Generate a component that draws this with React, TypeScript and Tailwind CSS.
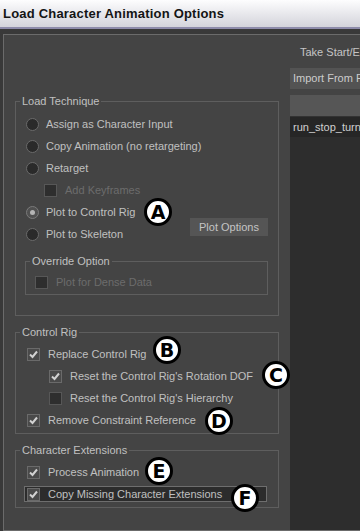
import React from 'react';

const Radio: React.FC<{ label: string; selected?: boolean }> = ({ label, selected = false }) => (
  <div className="flex h-[22px] items-center gap-[7px] pl-[10px]">
    <span
      className={`flex h-[13px] w-[13px] items-center justify-center rounded-full border ${
        selected ? 'border-[#7a7a7a] bg-[#505050]' : 'border-[#6a6a6a] bg-[#2a2a2a]'
      }`}
    >
      {selected && <span className="h-[5px] w-[5px] rounded-full bg-[#b4b4b4]" />}
    </span>
    <span className="text-[#c0c0c0]">{label}</span>
  </div>
);

const Check: React.FC<{ checked?: boolean }> = ({ checked = false }) =>
  checked ? (
    <span className="flex h-[13px] w-[13px] items-center justify-center border border-[#6a6a6a] bg-[#4a4a4a]">
      <svg width="11" height="11" viewBox="0 0 11 11">
        <polyline points="2,5.5 4.5,8 9,2.5" fill="none" stroke="#d2d2d2" strokeWidth="2" />
      </svg>
    </span>
  ) : (
    <span className="h-[13px] w-[13px] border border-[#575757] bg-[#2e2e2e]" />
  );

const CheckRow: React.FC<{ label: string; checked?: boolean; disabled?: boolean; indent?: string }> = ({
  label,
  checked = false,
  disabled = false,
  indent = 'pl-[11px]',
}) => (
  <div className={`flex h-[22px] items-center gap-[8px] ${indent}`}>
    <Check checked={checked} />
    <span className={disabled ? 'text-[#6c6c6c]' : 'text-[#c0c0c0]'}>{label}</span>
  </div>
);

const Group: React.FC<{ title: string; className?: string; children: React.ReactNode }> = ({ title, className = '', children }) => (
  <fieldset className={`border border-[#5e5e5e] ${className}`}>
    <legend className="ml-[4px] px-[2px] leading-[13px] text-[#c0c0c0]">{title}</legend>
    {children}
  </fieldset>
);

const Badge: React.FC<{ letter: string; x: number; y: number }> = ({ letter, x, y }) => (
  <div
    className="absolute flex h-[28px] w-[28px] items-center justify-center rounded-full border-[3px] border-black bg-white text-[19px] font-bold leading-none text-black"
    style={{ left: x - 14, top: y - 14, fontFamily: '"DejaVu Sans", sans-serif' }}
  >
    {letter}
  </div>
);

export default function App() {
  return (
    <div className="relative flex h-[531px] w-[360px] flex-col overflow-hidden bg-[#393939] font-['Liberation_Sans',Arial,sans-serif] text-[11px]">
      {/* title bar */}
      <div className="flex h-[27px] items-center bg-gradient-to-b from-[#fdfdfe] to-[#d4d4db] pl-[3px] text-[13px] font-bold tracking-[0.2px] text-[#141414]">
        Load Character Animation Options
      </div>
      <div className="h-[2px] bg-[#8d8baa]" />
      <div className="h-[5px]" />

      {/* dialog frame */}
      <div className="ml-[3px] flex flex-1 border-y border-l border-[#6b6b6b] bg-[#444444]">
        <div className="w-[286px] pt-[60px]">
          <Group title="Load Technique" className="ml-[11px] w-[264px] pb-[20px]">
            <div className="pt-[5px]">
              <Radio label="Assign as Character Input" />
              <Radio label="Copy Animation (no retargeting)" />
              <Radio label="Retarget" />
              <CheckRow label="Add Keyframes" disabled indent="pl-[28px]" />
              <div className="flex items-center">
                <div>
                  <Radio label="Plot to Control Rig" selected />
                  <Radio label="Plot to Skeleton" />
                </div>
                <div className="ml-auto mr-[10px] mt-[8px] flex h-[18px] w-[78px] items-center justify-center bg-[#555555] text-[#c4c4c4]">
                  Plot Options
                </div>
              </div>
            </div>
            <Group title="Override Option" className="ml-[9px] mt-[10px] w-[243px] pb-[1px]">
              <div className="pt-[3px]">
                <CheckRow label="Plot for Dense Data" disabled indent="pl-[9px]" />
              </div>
            </Group>
          </Group>

          <Group title="Control Rig" className="ml-[11px] mt-[10px] w-[264px] pb-[2px]">
            <div className="pt-[4px]">
              <CheckRow label="Replace Control Rig" checked />
              <CheckRow label="Reset the Control Rig's Rotation DOF" checked indent="pl-[33px]" />
              <CheckRow label="Reset the Control Rig's Hierarchy" indent="pl-[33px]" />
              <CheckRow label="Remove Constraint Reference" checked />
            </div>
          </Group>

          <Group title="Character Extensions" className="ml-[11px] mt-[10px] w-[264px] pb-[2px]">
            <div className="pt-[4px]">
              <CheckRow label="Process Animation" checked />
              <div className="flex h-[22px] items-center">
                <div className="ml-[8px] flex h-[16px] w-[243px] items-center gap-[8px] border border-[#6e6e6e] bg-[#2c2c2c] pl-[2px]">
                  <Check checked />
                  <span className="text-[#c0c0c0]">Copy Missing Character Extensions</span>
                </div>
              </div>
            </div>
          </Group>
        </div>

        {/* right column: takes list */}
        <div className="flex min-w-0 flex-1 flex-col overflow-hidden">
          <div className="whitespace-nowrap pl-[10px] pt-[11px] leading-[13px] text-[#c4c4c4]">Take Start/End</div>
          <div className="mt-[9px] flex h-[21px] items-center whitespace-nowrap bg-[#535353] pl-[3px] text-[#cccccc]">
            Import From File
          </div>
          <div className="mt-[6px] flex flex-1 flex-col bg-[#2d2d2d]">
            <div className="h-[21px] bg-[#565656]" />
            <div className="h-px bg-[#333333]" />
            <div className="flex h-[20px] items-center whitespace-nowrap bg-[#262626] pl-[3px] text-[#d0d0d0]">
              run_stop_turn
            </div>
          </div>
        </div>
      </div>

      {/* callout badges */}
      <Badge letter="A" x={158} y={212} />
      <Badge letter="B" x={167} y={350} />
      <Badge letter="C" x={276} y={375} />
      <Badge letter="D" x={219} y={421} />
      <Badge letter="E" x={159} y={471} />
      <Badge letter="F" x={245} y={498} />
    </div>
  );
}
